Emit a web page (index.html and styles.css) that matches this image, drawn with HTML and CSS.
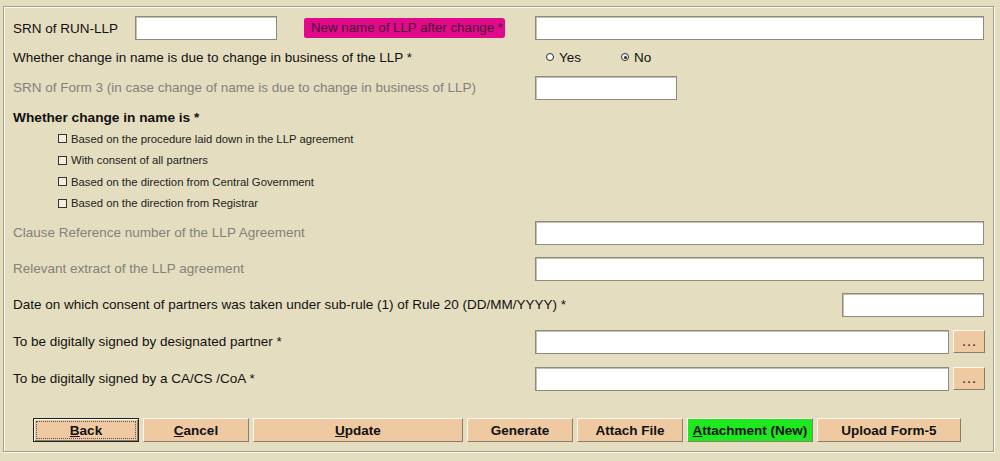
FILE: index.html
```html
<!DOCTYPE html>
<html>
<head>
<meta charset="utf-8">
<link rel="stylesheet" href="styles.css">
</head>
<body>
<div class="panel">
  <div class="row r1">
    <span class="lbl c-srn">SRN of RUN-LLP</span>
    <div class="field w142"></div>
    <span class="hl">New name of LLP after change *</span>
    <div class="field w449"></div>
  </div>

  <div class="row r2">
    <span class="lbl col">Whether change in name is due to change in business of the LLP *</span>
    <div class="radios">
      <span class="opt yes"><span class="radio"></span>Yes</span>
      <span class="opt"><span class="radio on"></span>No</span>
    </div>
  </div>

  <div class="row r3">
    <span class="lbl col grey">SRN of Form 3 (in case change of name is due to change in business of LLP)</span>
    <div class="field w142"></div>
  </div>

  <div class="row r4">
    <span class="lbl bold">Whether change in name is *</span>
  </div>

  <div class="checks">
    <div class="chk"><span class="box"></span>Based on the procedure laid down in the LLP agreement</div>
    <div class="chk"><span class="box"></span>With consent of all partners</div>
    <div class="chk"><span class="box"></span>Based on the direction from Central Government</div>
    <div class="chk"><span class="box"></span>Based on the direction from Registrar</div>
  </div>

  <div class="row r-clause">
    <span class="lbl col grey">Clause Reference number of the LLP Agreement</span>
    <div class="field w449"></div>
  </div>

  <div class="row r-gap13">
    <span class="lbl col grey">Relevant extract of the LLP agreement</span>
    <div class="field w449"></div>
  </div>

  <div class="row r-gap13">
    <span class="lbl date-lbl">Date on which consent of partners was taken under sub-rule (1) of Rule 20 (DD/MM/YYYY) *</span>
    <div class="field w142"></div>
  </div>

  <div class="row r-gap14">
    <span class="lbl col">To be digitally signed by designated partner *</span>
    <div class="field w414"></div>
    <div class="dots">...</div>
  </div>

  <div class="row r-gap14">
    <span class="lbl col">To be digitally signed by a CA/CS /CoA *</span>
    <div class="field w414"></div>
    <div class="dots">...</div>
  </div>

  <div class="buttons">
    <div class="btn focus w106"><span><u>B</u>ack</span></div>
    <div class="btn w106"><span><u>C</u>ancel</span></div>
    <div class="btn w210"><span><u>U</u>pdate</span></div>
    <div class="btn w106">Generate</div>
    <div class="btn w106">Attach File</div>
    <div class="btn green w126"><span><u>A</u>ttachment (New)</span></div>
    <div class="btn w144">Upload Form-5</div>
  </div>
</div>
</body>
</html>
```

FILE: styles.css
```css
html, body {
  margin: 0;
  padding: 0;
}

body {
  width: 1000px;
  height: 461px;
  overflow: hidden;
  background: #e5ddbf;
  font-family: "Liberation Sans", Arial, sans-serif;
  font-size: 13.5px;
  color: #111;
}

.panel {
  box-sizing: border-box;
  margin: 6px 0 0 3px;
  width: 991px;
  height: 446px;
  border: 1px solid #a29e8c;
  box-shadow: inset 1px 1px 0 #fdfbf4, 1px 1px 0 #fdfbf4;
  padding: 9px 0 0 9px;
}

.row {
  display: flex;
  align-items: center;
}

.lbl {
  white-space: nowrap;
}

.col {
  width: 522px;
  flex: none;
}

.grey {
  color: #82817c;
}

.bold {
  font-weight: bold;
  font-size: 13.7px;
}

.c-srn {
  width: 122px;
  flex: none;
}

.field {
  flex: none;
  box-sizing: border-box;
  height: 24px;
  background: #fff;
  border: 1px solid #8f8b7c;
  box-shadow: inset 1px 1px 0 #c4c0b1;
}

.w142 { width: 142px; }
.w449 { width: 449px; }
.w414 { width: 414px; }

.hl {
  flex: none;
  box-sizing: border-box;
  margin: 0 30px 0 27px;
  width: 201px;
  height: 20px;
  line-height: 20px;
  padding-left: 7px;
  background: #e10a8b;
  color: #4a1433;
  font-size: 13.3px;
  border-radius: 2px 3px 3px 2px;
  white-space: nowrap;
  overflow: hidden;
}

.r1 { height: 24px; }

.r2 {
  margin-top: 6px;
  height: 22px;
}

.radios {
  display: flex;
  align-items: center;
  padding-left: 11px;
}

.opt {
  display: flex;
  align-items: center;
  gap: 5px;
}

.opt.yes {
  width: 75px;
}

.radio {
  box-sizing: border-box;
  width: 8px;
  height: 8px;
  border: 1px solid #2a2a2a;
  border-radius: 50%;
  background: #fff;
  position: relative;
}

.radio.on::after {
  content: "";
  position: absolute;
  left: 1.5px;
  top: 1.5px;
  width: 3px;
  height: 3px;
  border-radius: 50%;
  background: #222;
}

.r3 {
  margin-top: 8px;
  height: 23px;
}

.r4 {
  margin-top: 9px;
  height: 18px;
}

.checks {
  margin-top: 2px;
}

.chk {
  display: flex;
  align-items: center;
  height: 21.5px;
  padding-left: 45px;
  font-size: 11.3px;
  color: #222;
}

.box {
  box-sizing: border-box;
  width: 9px;
  height: 9px;
  margin-right: 4px;
  border: 1.5px solid #333;
  background: #f3eedb;
}

.r-clause {
  margin-top: 7px;
  height: 23px;
}

.r-gap13 {
  margin-top: 13px;
  height: 23px;
}

.r-gap14 {
  margin-top: 14px;
  height: 23px;
}

.date-lbl {
  width: 829px;
  flex: none;
}

.dots {
  box-sizing: border-box;
  margin-left: 4px;
  width: 32px;
  height: 23px;
  background: #eec9a1;
  border: 1px solid;
  border-color: #fffaf0 #8a7d6a #8a7d6a #fffaf0;
  font-weight: bold;
  font-size: 11px;
  letter-spacing: 2px;
  text-indent: 2px;
  text-align: center;
  line-height: 22px;
  color: #333;
}

.buttons {
  display: flex;
  gap: 4px;
  margin: 28px 0 0 20px;
}

.btn {
  box-sizing: border-box;
  height: 24px;
  display: flex;
  align-items: center;
  justify-content: center;
  background: #eec9a1;
  border: 1px solid;
  border-color: #fffaf0 #8a7d6a #8a7d6a #fffaf0;
  font-weight: bold;
  font-size: 13.5px;
  color: #111;
  white-space: nowrap;
}

.btn.focus {
  border: 1px solid #222;
  box-shadow: inset 1px 1px 0 #fffaf0, inset -1px -1px 0 #8a7d6a;
  outline: 1px dotted #555;
  outline-offset: -4px;
}

.btn.green {
  background: #1ee81e;
}

.w106 { width: 106px; }
.w126 { width: 126px; }
.w144 { width: 144px; }
.w210 { width: 210px; }
```
